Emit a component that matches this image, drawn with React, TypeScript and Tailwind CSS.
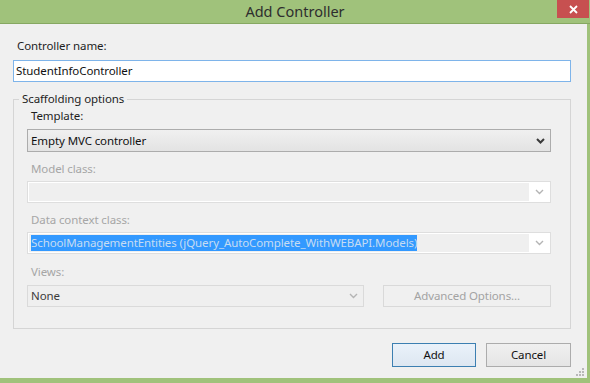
import React from "react";

function Chevron({ color, bold }: { color: string; bold?: boolean }) {
  return (
    <svg width="9" height="6" viewBox="0 0 9 6" className="shrink-0">
      <path d="M1 1 L4.5 4.5 L8 1" fill="none" stroke={color} strokeWidth={bold ? 2 : 1.4} />
    </svg>
  );
}

function Label({ text, disabled }: { text: string; disabled?: boolean }) {
  return (
    <div className={"h-4 leading-4 pl-[4px] " + (disabled ? "text-[#a6a6a6]" : "text-[#1e1e1e]")}>{text}</div>
  );
}

function DisabledSelect({ children }: { children?: React.ReactNode }) {
  return (
    <div className="h-[22px] flex border border-[#dedede] bg-white p-[1px]">
      <div className="flex-1 bg-[#efefef] flex items-center pl-[2px] overflow-hidden">{children}</div>
      <div className="w-[20px] flex items-center justify-center">
        <Chevron color="#b4b4b4" />
      </div>
    </div>
  );
}

export default function App() {
  return (
    <div
      className="w-[590px] h-[383px] bg-[#a0c27b] flex flex-col text-[11.5px] tracking-[-0.1px] overflow-hidden"
      style={{ fontFamily: '"Noto Sans", "Open Sans", sans-serif' }}
    >
      <div className="h-[24px] relative flex items-center justify-center text-[14.5px] tracking-normal text-[#2e2e2e] border-b border-[#86a862]">
        Add Controller
        <div className="absolute top-0 right-[1px] w-[32px] h-[18px] bg-[#c75050] flex items-center justify-center">
          <svg width="9" height="9" viewBox="0 0 9 9">
            <path d="M1 1 L8 8 M8 1 L1 8" stroke="#ffffff" strokeWidth="1.8" />
          </svg>
        </div>
      </div>
      <div className="flex-1 mr-[3px] mb-[5px] bg-[#f0f0f0] pl-[13px] pr-[16px] pt-[14px] flex flex-col">
        <Label text="Controller name:" />
        <div className="mt-[6px] h-[22px] border border-[#7eb4ea] bg-white flex items-center pl-[2px] text-[#111]">
          StudentInfoController
        </div>

        <fieldset className="mt-[9px] border border-[#d5d5d5] pl-[13px] pr-[19px] pb-[21px]">
          <legend className="-ml-[8px] px-[3px] h-4 leading-4 text-[#1e1e1e]">Scaffolding options</legend>
          <div className="mt-[1px]">
            <Label text="Template:" />
          </div>
          <div className="mt-[5px] h-[23px] border border-[#acacac] bg-gradient-to-b from-[#f0f0f0] to-[#e3e3e3] flex items-center pl-[3px] text-[#111]">
            <span className="flex-1">Empty MVC controller</span>
            <div className="w-[20px] flex items-center justify-center">
              <Chevron color="#3a3a3a" bold />
            </div>
          </div>

          <div className="mt-[9px]">
            <Label text="Model class:" disabled />
          </div>
          <div className="mt-[4px]">
            <DisabledSelect />
          </div>

          <div className="mt-[9px]">
            <Label text="Data context class:" disabled />
          </div>
          <div className="mt-[4px]">
            <DisabledSelect>
              <span className="bg-[#3399ff] text-[#c6dcf2] h-[16px] leading-[16px] whitespace-nowrap">
                SchoolManagementEntities (jQuery_AutoComplete_WithWEBAPI.Models)
              </span>
            </DisabledSelect>
          </div>

          <div className="mt-[10px]">
            <Label text="Views:" disabled />
          </div>
          <div className="mt-[5px] flex gap-[19px]">
            <div className="w-[337px] h-[22px] border border-[#dadada] bg-[#efefef] flex items-center pl-[3px] text-[#3c3c3c]">
              <span className="flex-1">None</span>
              <div className="w-[20px] flex items-center justify-center">
                <Chevron color="#b4b4b4" />
              </div>
            </div>
            <div className="flex-1 h-[22px] border border-[#d9d9d9] bg-[#f0f0f0] flex items-center justify-center text-[#a3a3a3]">
              Advanced Options...
            </div>
          </div>
        </fieldset>

        <div className="mt-[14px] flex justify-end gap-[10px]">
          <div className="w-[84px] h-[24px] border border-[#3c7fb1] bg-gradient-to-b from-[#eaf2fa] to-[#dde7f1] flex items-center justify-center text-[#111]">
            Add
          </div>
          <div className="w-[85px] h-[24px] border border-[#acacac] bg-gradient-to-b from-[#f0f0f0] to-[#e5e5e5] flex items-center justify-center text-[#111]">
            Cancel
          </div>
        </div>
        <div className="flex-1 flex justify-end items-end -mr-[14px] pb-[1px]">
          <svg width="9" height="9" viewBox="0 0 9 9">
            <g fill="#b8b8b8">
              <rect x="6" y="0" width="2" height="2" />
              <rect x="3" y="3" width="2" height="2" />
              <rect x="6" y="3" width="2" height="2" />
              <rect x="0" y="6" width="2" height="2" />
              <rect x="3" y="6" width="2" height="2" />
              <rect x="6" y="6" width="2" height="2" />
            </g>
          </svg>
        </div>
      </div>
    </div>
  );
}
